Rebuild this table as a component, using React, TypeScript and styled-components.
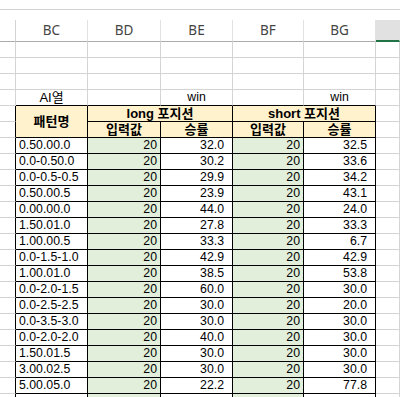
import React from 'react';
import styled, {createGlobalStyle} from 'styled-components';

const GRID = '#d4d4d4';
const INK = '#000000';
const YELLOW = '#fff2cc';
const GREEN = '#e2efda';
const COLS = '16px 72px 73px 72px 71px 72px 1fr';

const GlobalStyle = createGlobalStyle`
    html, body {
        margin: 0;
        padding: 0;
        background: #ffffff;
        overflow: hidden;
    }
    * {
        box-sizing: border-box;
    }
`

type Align = 'left' | 'center' | 'right';

type CellDef = {
    text?: string;
    bg?: string;
    align?: Align;
    bold?: boolean;
    big?: boolean;
    right?: string;
    bottom?: string;
    pr?: number;
    rowSpan?: number;
    colSpan?: number;
};

const rows = [
    ['0.50.00.0', '32.0', '32.5'],
    ['0.0-0.50.0', '30.2', '33.6'],
    ['0.0-0.5-0.5', '29.9', '34.2'],
    ['0.50.00.5', '23.9', '43.1'],
    ['0.00.00.0', '44.0', '24.0'],
    ['1.50.01.0', '27.8', '33.3'],
    ['1.00.00.5', '33.3', '6.7'],
    ['0.0-1.5-1.0', '42.9', '42.9'],
    ['1.00.01.0', '38.5', '53.8'],
    ['0.0-2.0-1.5', '60.0', '30.0'],
    ['0.0-2.5-2.5', '30.0', '20.0'],
    ['0.0-3.5-3.0', '30.0', '30.0'],
    ['0.0-2.0-2.0', '40.0', '30.0'],
    ['1.50.01.5', '30.0', '30.0'],
    ['3.00.02.5', '30.0', '30.0'],
    ['5.00.05.0', '22.2', '77.8'],
    ['', '', ''],
];

const empty = (): CellDef[] => Array.from({length: 7}, () => ({}));

const buildCells = (): CellDef[] => {
    const out: CellDef[] = [];
    for (let i = 0; i < 3; i++) out.push(...empty());

    // row 4: labels above the table
    out.push(
        {},
        {text: 'AI열', align: 'center', bottom: INK, big: true},
        {bottom: INK},
        {text: 'win', align: 'center', bottom: INK},
        {bottom: INK},
        {text: 'win', align: 'center', bottom: INK},
        {},
    );

    // row 5-6: table head
    const head = {bg: YELLOW, align: 'center' as Align, bold: true, big: true, right: INK, bottom: INK};
    out.push(
        {right: INK},
        {...head, text: '패턴명', rowSpan: 2},
        {...head, text: 'long 포지션', colSpan: 2},
        {...head, text: 'short 포지션', colSpan: 2},
        {},
        {right: INK},
        {...head, text: '입력값'},
        {...head, text: '승률'},
        {...head, text: '입력값'},
        {...head, text: '승률'},
        {},
    );

    rows.forEach(([name, longWin, shortWin]) => {
        const last = name === '';
        out.push(
            {right: INK},
            {text: name, align: 'left', right: INK, bottom: INK},
            {text: last ? '' : '20', bg: GREEN, align: 'right', pr: 3, right: INK, bottom: INK},
            {text: longWin, align: 'right', pr: 8, right: INK, bottom: INK},
            {text: last ? '' : '20', bg: GREEN, align: 'right', pr: 3, right: INK, bottom: INK},
            {text: shortWin, align: 'right', pr: 8, right: INK, bottom: INK},
            {},
        );
    });
    return out;
};

const letters = ['', 'BC', 'BD', 'BE', 'BF', 'BG', ''];

export default function App() {
    const cells = buildCells();
    return (
        <>
            <GlobalStyle/>
            <Sheet>
                <TopEdge/>
                <HeaderRow>
                    {letters.map((l, i) => (
                        <ColHead key={i} $selected={i === 6} $blank={i === 0}>{l}</ColHead>
                    ))}
                </HeaderRow>
                <Grid>
                    {cells.map((c, i) => (
                        <Cell
                            key={i}
                            $bg={c.bg}
                            $align={c.align ?? 'left'}
                            $bold={c.bold}
                            $big={c.big}
                            $right={c.right ?? GRID}
                            $bottom={c.bottom ?? GRID}
                            $pr={c.pr ?? 3}
                            $rowSpan={c.rowSpan ?? 1}
                            $colSpan={c.colSpan ?? 1}
                        >
                            {c.text}
                        </Cell>
                    ))}
                </Grid>
            </Sheet>
        </>
    );
}

const Sheet = styled.div`
    width: 400px;
    height: 397px;
    overflow: hidden;
    background: #ffffff;
`

const TopEdge = styled.div`
    height: 10px;
    border-bottom: 1px solid ${GRID};
    margin-bottom: 10px;
`

const HeaderRow = styled.div`
    display: grid;
    grid-template-columns: ${COLS};
    height: 22px;
`

const ColHead = styled.div<{ $selected?: boolean; $blank?: boolean }>`
    display: flex;
    align-items: center;
    justify-content: center;
    padding-bottom: 2px;
    font-family: "Noto Sans", "Liberation Sans", sans-serif;
    font-size: 13.5px;
    color: #444444;
    background: ${p => p.$selected ? '#e1e1e1' : '#ffffff'};
    border-right: 1px solid ${p => p.$blank ? GRID : '#e1e1e1'};
    border-bottom: ${p => p.$selected ? '2px solid #217346' : '1px solid #acacac'};
`

const Grid = styled.div`
    display: grid;
    grid-template-columns: ${COLS};
    grid-auto-rows: 16px;
`

const Cell = styled.div<{
    $bg?: string;
    $align: Align;
    $bold?: boolean;
    $big?: boolean;
    $right: string;
    $bottom: string;
    $pr: number;
    $rowSpan: number;
    $colSpan: number;
}>`
    display: flex;
    align-items: center;
    justify-content: ${p => p.$align === 'left' ? 'flex-start' : p.$align === 'right' ? 'flex-end' : 'center'};
    grid-row: span ${p => p.$rowSpan};
    grid-column: span ${p => p.$colSpan};
    padding: 0 ${p => p.$pr}px 0 3px;
    background: ${p => p.$bg ?? '#ffffff'};
    border-right: 1px solid ${p => p.$right};
    border-bottom: 1px solid ${p => p.$bottom};
    font-family: "Liberation Sans", "Noto Sans CJK KR", sans-serif;
    font-size: ${p => p.$big ? '13px' : '12.3px'};
    font-weight: ${p => p.$bold ? 700 : 400};
    color: #000000;
    white-space: nowrap;
    overflow: hidden;
    line-height: 1;
`
